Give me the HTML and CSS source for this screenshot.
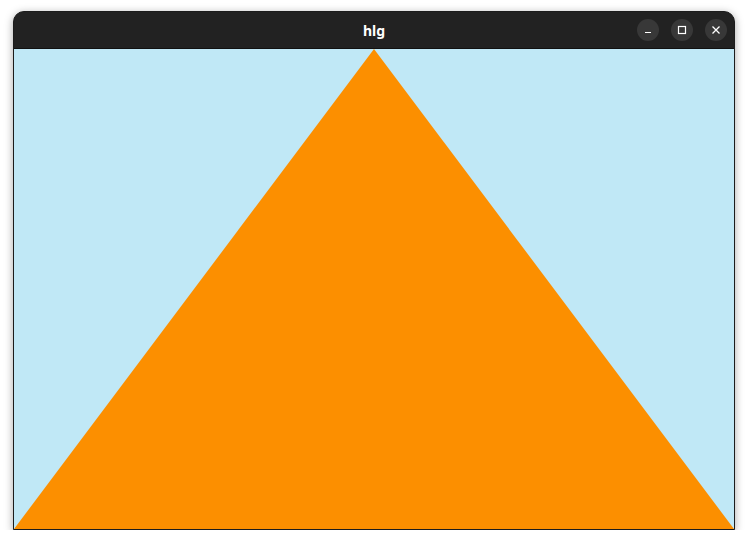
FILE: index.html
```html
<!DOCTYPE html>
<html>
<head>
<meta charset="utf-8">
<link rel="stylesheet" href="styles.css">
</head>
<body>
<div class="window">
  <div class="titlebar">
    <span class="title">hlg</span>
    <div class="controls">
      <span class="btn"><svg width="10" height="10" viewBox="0 0 10 10"><path d="M2 7.5h6" stroke="#fff" stroke-width="1.2"/></svg></span>
      <span class="btn"><svg width="10" height="10" viewBox="0 0 10 10"><rect x="1.5" y="1.5" width="7" height="7" fill="none" stroke="#fff" stroke-width="1.2"/></svg></span>
      <span class="btn"><svg width="10" height="10" viewBox="0 0 10 10"><path d="M1.5 1.5l7 7M8.5 1.5l-7 7" stroke="#fff" stroke-width="1.3"/></svg></span>
    </div>
  </div>
  <svg class="canvas" width="720" height="480" viewBox="0 0 720 480">
    <rect width="720" height="480" fill="#c0e8f6"/>
    <polygon points="360,0 0,480 720,480" fill="#fc8f00"/>
  </svg>
</div>
</body>
</html>
```
FILE: styles.css
```css
html, body {
  margin: 0;
  background: #ffffff;
}
body {
  padding: 11px 0 0 13px;
  font-family: "Noto Sans", "DejaVu Sans", sans-serif;
}
.window {
  width: 720px;
  border: 1px solid #1c1c1c;
  border-radius: 11px 11px 0 0;
  background: #222222;
  box-shadow: 0 2px 8px rgba(0,0,0,0.35);
  overflow: hidden;
}
.titlebar {
  height: 36px;
  border-bottom: 1px solid #111;
  display: flex;
  align-items: center;
  justify-content: center;
  position: relative;
}
.title {
  color: #ffffff;
  font-weight: 700;
  font-size: 14px;
}
.controls {
  position: absolute;
  right: 7px;
  top: 7px;
  display: flex;
  gap: 12px;
}
.btn {
  width: 22px;
  height: 22px;
  border-radius: 50%;
  background: #383838;
  display: flex;
  align-items: center;
  justify-content: center;
}
.canvas {
  display: block;
}
```
